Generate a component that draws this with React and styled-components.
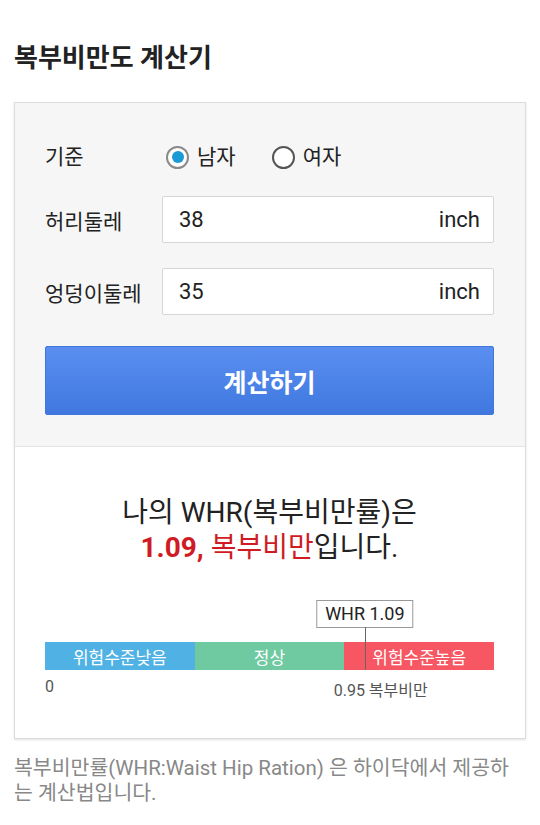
import React from 'react'
import styled, { createGlobalStyle } from 'styled-components'

const GlobalStyle = createGlobalStyle`
  body {
    margin: 0;
    background: #fff;
    font-family: Roboto, "Noto Sans CJK KR", sans-serif;
    color: #222;
  }
`

const Page = styled.div`
  padding: 36px 14px 20px 14px;
`

const Title = styled.h1`
  margin: 0 0 22px 0;
  font-size: 26px;
  font-weight: 700;
  line-height: 44px;
  color: #222;
`

const Card = styled.div`
  border: 1px solid #dcdcdc;
  box-shadow: 0 1px 2px rgba(0, 0, 0, 0.12);
  background: #fff;
`

const Form = styled.div`
  background: #f6f6f6;
  padding: 28px 31px 31px 30px;
  border-bottom: 1px solid #e4e4e4;
`

const Row = styled.div`
  display: flex;
  align-items: center;
  height: ${p => p.h || 48}px;
  margin-bottom: ${p => p.mb || 0}px;
`

const Label = styled.div`
  width: 117px;
  font-size: 21px;
  color: #222;
`

const RadioGroup = styled.div`
  display: flex;
  align-items: center;
`

const RadioItem = styled.label`
  display: flex;
  align-items: center;
  margin-right: 32px;
  font-size: 21px;
  color: #222;
`

const RadioCircle = styled.span`
  width: 19px;
  height: 19px;
  border-radius: 50%;
  border: 2px solid ${p => (p.checked ? '#8a8a8a' : '#555')};
  background: #fff;
  margin: 4px 8px 0 4px;
  display: flex;
  align-items: center;
  justify-content: center;
  &::after {
    content: '';
    display: ${p => (p.checked ? 'block' : 'none')};
    width: 12px;
    height: 12px;
    border-radius: 50%;
    background: #1a9ad6;
  }
`

const InputBox = styled.div`
  flex: 1;
  height: 47px;
  box-sizing: border-box;
  background: #fff;
  border: 1px solid #d6d6d6;
  border-radius: 2px;
  display: flex;
  align-items: center;
  justify-content: space-between;
  padding: 0 13px 0 16px;
  font-size: 22px;
  color: #222;
`

const Unit = styled.span`
  font-size: 22px;
  color: #222;
`

const Button = styled.button`
  display: block;
  width: 100%;
  height: 69px;
  margin-top: 31px;
  border: 1px solid #3f77db;
  border-radius: 2px;
  background: linear-gradient(#5a8ff0, #4078e0);
  color: #fff;
  font-family: Roboto, "Noto Sans CJK KR", sans-serif;
  font-size: 25px;
  font-weight: 700;
`

const Result = styled.div`
  padding: 48px 31px 38px 30px;
`

const Message = styled.div`
  text-align: center;
  font-size: 28px;
  line-height: 35px;
  color: #222;
`

const Red = styled.span`
  color: #d01b25;
  font-weight: ${p => (p.bold ? 700 : 400)};
`

const Chart = styled.div`
  position: relative;
  margin-top: 35px;
  padding-top: 42px;
`

const Bar = styled.div`
  display: flex;
  height: 28px;
`

const Segment = styled.div`
  flex: 1;
  background: ${p => p.bg};
  color: #fff;
  font-size: 17px;
  display: flex;
  align-items: center;
  justify-content: center;
`

const Marker = styled.div`
  position: absolute;
  top: 0;
  bottom: 0;
  width: 0;
`

const Tag = styled.div`
  position: absolute;
  top: 0;
  left: 50%;
  transform: translateX(-50%);
  white-space: nowrap;
  background: #fff;
  border: 1px solid #999;
  padding: 0 8px;
  height: 26px;
  line-height: 26px;
  font-size: 18px;
  color: #222;
`

const MarkerLine = styled.div`
  position: absolute;
  top: 27px;
  bottom: 0;
  left: 0;
  width: 1px;
  background: #666;
`

const Scale = styled.div`
  position: relative;
  height: 30px;
  font-size: 16px;
  color: #555;
`

const Tick = styled.span`
  position: absolute;
  top: 7px;
`

const Note = styled.p`
  margin: 17px 0 0 0;
  font-size: 20.5px;
  line-height: 25px;
  color: #888;
`

export default function App() {
  const whr = 1.09
  const pos = Math.min(whr / 1.53, 1) * 100

  return (
    <>
      <GlobalStyle />
      <Page>
        <Title>복부비만도 계산기</Title>
        <Card>
          <Form>
            <Row h={48} mb={17}>
              <Label>기준</Label>
              <RadioGroup>
                <RadioItem>
                  <RadioCircle checked />
                  남자
                </RadioItem>
                <RadioItem>
                  <RadioCircle />
                  여자
                </RadioItem>
              </RadioGroup>
            </Row>
            <Row h={47} mb={25}>
              <Label>허리둘레</Label>
              <InputBox>
                38<Unit>inch</Unit>
              </InputBox>
            </Row>
            <Row h={47}>
              <Label>엉덩이둘레</Label>
              <InputBox>
                35<Unit>inch</Unit>
              </InputBox>
            </Row>
            <Button>계산하기</Button>
          </Form>
          <Result>
            <Message>
              나의 WHR(복부비만률)은
              <br />
              <Red bold>1.09,</Red> <Red>복부비만</Red>입니다.
            </Message>
            <Chart>
              <Bar>
                <Segment bg="#50b2e4">위험수준낮음</Segment>
                <Segment bg="#6fc9a1">정상</Segment>
                <Segment bg="#f65762">위험수준높음</Segment>
              </Bar>
              <Marker style={{ left: `${pos}%` }}>
                <Tag>WHR {whr.toFixed(2)}</Tag>
                <MarkerLine />
              </Marker>
            </Chart>
            <Scale>
              <Tick style={{ left: 0 }}>0</Tick>
              <Tick style={{ left: '64.3%' }}>0.95 복부비만</Tick>
            </Scale>
          </Result>
        </Card>
        <Note>
          복부비만률(WHR:Waist Hip Ration) 은 하이닥에서 제공하는 계산법입니다.
        </Note>
      </Page>
    </>
  )
}
